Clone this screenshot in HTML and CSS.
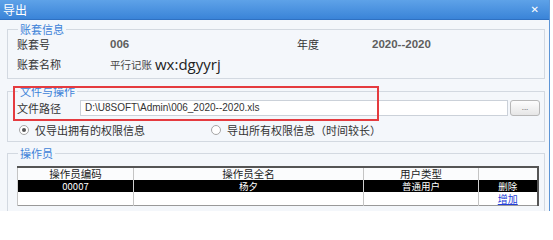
FILE: index.html
```html
<!DOCTYPE html>
<html lang="zh">
<head>
<meta charset="utf-8">
<title>导出</title>
<link rel="stylesheet" href="styles.css">
</head>
<body>
<div class="window">
  <div class="titlebar">
    <span class="title">导出</span>
    <span class="close">&#x2715;</span>
  </div>
  <div class="content">
    <fieldset class="group g1">
      <legend>账套信息</legend>
      <div class="info-grid">
        <span class="lbl">账套号</span>
        <span class="num">006</span>
        <span class="lbl">年度</span>
        <span class="num">2020--2020</span>
        <span class="lbl">账套名称</span>
        <span class="val">平行记账<span class="wm">wx:dgyyrj</span></span>
        <span></span>
        <span></span>
      </div>
    </fieldset>

    <fieldset class="group g2">
      <legend>文件与操作</legend>
      <div class="file-row">
        <span class="lbl file-lbl">文件路径</span>
        <div class="input">D:\U8SOFT\Admin\006_2020--2020.xls</div>
        <div class="btn">...</div>
      </div>
      <div class="radio-row">
        <label class="radio-item"><span class="radio checked"></span><span>仅导出拥有的权限信息</span></label>
        <label class="radio-item"><span class="radio"></span><span>导出所有权限信息（时间较长）</span></label>
      </div>
    </fieldset>

    <fieldset class="group g3">
      <legend>操作员</legend>
      <table class="grid">
        <colgroup>
          <col class="c1"><col class="c2"><col class="c3"><col class="c4">
        </colgroup>
        <tr class="head"><td>操作员编码</td><td>操作员全名</td><td>用户类型</td><td></td></tr>
        <tr class="sel"><td>00007</td><td>杨夕</td><td>普通用户</td><td>删除</td></tr>
        <tr class="empty"><td></td><td></td><td></td><td><span class="link">增加</span></td></tr>
      </table>
    </fieldset>

    <div class="mark"></div>
  </div>
</div>
</body>
</html>
```

FILE: styles.css
```css
* { box-sizing: border-box; }
html, body {
  margin: 0;
  padding: 0;
  background: #ffffff;
}
body {
  font-family: "Noto Sans CJK SC", "Liberation Sans", sans-serif;
  font-size: 11px;
  color: #333;
}
.window {
  width: 550px;
  height: 211px;
  overflow: hidden;
  position: relative;
  background: #f4f7fb;
  border-right: 1px solid #5d95d6;
}
.titlebar {
  width: 553px;
  height: 20px;
  display: flex;
  align-items: center;
  justify-content: space-between;
  padding: 0 14px 0 3px;
  background: linear-gradient(#5ea2e8, #3a84d8);
  border-bottom: 1px solid #2f71c2;
  color: #fff;
}
.title {
  font-size: 12px;
  line-height: 14px;
}
.close {
  font-size: 10px;
  font-weight: bold;
  line-height: 10px;
  font-family: "DejaVu Sans", sans-serif;
}
.content {
  padding: 3px 4px 0 7px;
  position: relative;
}
.group {
  margin: 0;
  padding: 0 4px 6px 9px;
  border: 1px solid #d3d9e1;
  min-width: 0;
}
.group legend {
  padding: 0 2px;
  margin-left: 1px;
  font-size: 11px;
  line-height: 13px;
  color: #3d82d8;
}
.info-grid {
  display: grid;
  grid-template-columns: 93px 187px 75px auto;
  grid-auto-rows: 16px;
  row-gap: 4px;
  align-items: center;
  line-height: 16px;
}
.lbl {
  color: #333;
  font-size: 11px;
}
.num {
  font-family: "Liberation Sans", sans-serif;
  font-weight: bold;
  font-size: 11.5px;
  color: #5e5e5e;
}
.val {
  font-size: 10.5px;
  color: #444;
  white-space: nowrap;
}
.wm {
  font-family: "Open Sans", sans-serif;
  font-size: 15px;
  color: #222;
  margin-left: 3px;
  position: relative;
  top: 1px;
}
.g2 {
  margin-top: 6px;
  padding-bottom: 3px;
}
.file-row {
  display: flex;
  align-items: center;
  height: 17px;
  margin-top: 1px;
}
.file-lbl {
  width: 63px;
}
.input {
  flex: 1;
  height: 16px;
  background: #fff;
  border: 1px solid #cbd1d9;
  padding-left: 4px;
  font-family: "Liberation Sans", sans-serif;
  font-size: 10px;
  line-height: 14px;
  color: #333;
}
.btn {
  width: 30px;
  height: 16px;
  margin-left: 2px;
  border: 1px solid #b8b8b8;
  border-radius: 3px;
  background: linear-gradient(#fdfdfd, #e6e6e6);
  font-size: 8px;
  line-height: 12px;
  text-align: center;
  color: #777;
}
.radio-row {
  display: grid;
  grid-template-columns: 192px auto;
  padding-left: 2px;
  margin-top: 6px;
  height: 16px;
  align-items: center;
}
.radio-item {
  display: flex;
  align-items: center;
  gap: 6px;
  font-size: 11px;
  color: #333;
}
.radio {
  width: 10px;
  height: 10px;
  border-radius: 50%;
  border: 1px solid #a6a6a6;
  background: #fff;
  display: flex;
  align-items: center;
  justify-content: center;
}
.radio.checked::after {
  content: "";
  width: 4px;
  height: 4px;
  border-radius: 50%;
  background: #555;
}
.g3 {
  margin-top: 5px;
  height: 80px;
}
.grid {
  margin-top: 6px;
  width: 520px;
  border-collapse: collapse;
  table-layout: fixed;
  border-top: 2px solid #555;
  border-right: 2px solid #555;
  border-left: 1px solid #777;
  border-bottom: 1px solid #999;
  font-size: 10.5px;
}
.c1 { width: 116px; }
.c2 { width: 230px; }
.c3 { width: 115px; }
.c4 { width: 59px; }
.grid td {
  padding: 0;
  text-align: center;
  vertical-align: middle;
  border-left: 1px solid #c4c4c4;
  white-space: nowrap;
}
.head td {
  height: 12px;
  line-height: 12px;
  background: #fbfcfd;
  color: #222;
}
.sel td {
  height: 12px;
  line-height: 12px;
  background: #000;
  color: #fff;
  font-size: 9.5px;
  border-left: 1px solid #d0d0d0;
}
.empty td {
  height: 13px;
  line-height: 13px;
  background: #fff;
}
.link {
  color: #2440d8;
  text-decoration: underline;
  font-size: 10px;
}
.mark {
  position: absolute;
  left: 13px;
  top: 66px;
  width: 366px;
  height: 35px;
  border: 2px solid #e53b3f;
  pointer-events: none;
}
```
